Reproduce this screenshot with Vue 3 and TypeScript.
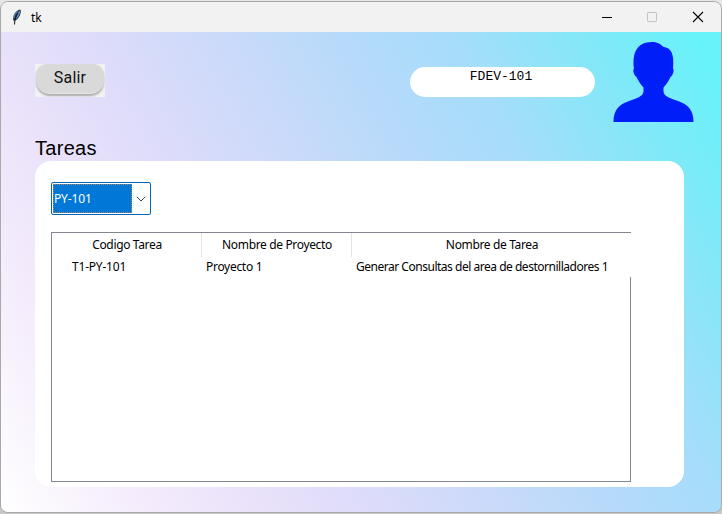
<script setup lang="ts">
import { ref } from 'vue'

interface Task {
  code: string
  project: string
  name: string
}

const user = 'FDEV-101'
const selected = ref('PY-101')
const tasks = ref<Task[]>([
  { code: 'T1-PY-101', project: 'Proyecto 1', name: 'Generar Consultas del area de destornilladores 1' },
])
</script>

<template>
  <div class="desktop">
    <div class="window">
      <header class="titlebar">
        <svg class="feather" width="12" height="18" viewBox="0 0 12 18">
          <path d="M2.200 12.500C1.500 8 4 2.500 9.500 1.500C10.500 5 8.500 10 4.500 12.500Z" fill="#1d2c42" />
          <path d="M5 10.500C5.200 7 6.700 4.200 9 2.600C9.300 5.500 8 8.500 5.500 10.800Z" fill="#5f93d2" />
          <path d="M2.900 10.500C3 7.500 4.500 5 6.800 3.600" fill="none" stroke="#7fa6d6" stroke-width=".9" />
          <path d="M7 5L4 11L3.500 16.500" fill="none" stroke="#111820" stroke-width="1" />
        </svg>
        <span class="title">tk</span>
        <div class="controls">
          <svg width="12" height="12" viewBox="0 0 12 12"><path d="M1 6.500H11" stroke="#000" /></svg>
          <svg width="12" height="12" viewBox="0 0 12 12"><rect x="1.500" y="1.500" width="9" height="9" rx=".7" fill="none" stroke="#c2c2c2" /></svg>
          <svg width="12" height="12" viewBox="0 0 12 12"><path d="M1 1L11 11M11 1L1 11" stroke="#000" stroke-width="1.100" /></svg>
        </div>
      </header>
      <main class="content">
        <div class="top">
          <div class="exit-frame"><button class="exit">Salir</button></div>
          <div class="user">{{ user }}</div>
          <svg class="avatar" width="82" height="82" viewBox="0 0 82 82">
            <path
              fill="#001ef8"
              d="M1.500 81C1.500 69 7 63.500 17 60C25 57 31.500 55.500 31.500 50V46.500C28 43 26 39 24.500 36C22 34.500 20.300 29 22 27.500C20 12 25 1 40 1C46 1 49 3.500 51.500 6C59 6.500 62.500 13 61 27.500C62.500 29 61 34.500 58.500 36C57 39 55 43 51.500 46.500V50C51.500 55.500 58 57 66 60C76 63.500 81.500 69 81.500 81Z"
            />
          </svg>
        </div>
        <h1 class="heading">Tareas</h1>
        <section class="panel">
          <div class="combo">
            <span class="value">{{ selected }}</span>
            <span class="arrow">
              <svg width="10" height="6" viewBox="0 0 10 6"><path d="M.8 .8L5 5L9.200 .8" fill="none" stroke="#444" /></svg>
            </span>
          </div>
          <div class="table">
            <div class="row head">
              <span>Codigo Tarea</span>
              <span>Nombre de Proyecto</span>
              <span>Nombre de Tarea</span>
            </div>
            <div v-for="task in tasks" :key="task.code" class="row item">
              <span class="code">{{ task.code }}</span>
              <span class="project">{{ task.project }}</span>
              <span class="name">{{ task.name }}</span>
            </div>
            <div class="rest"></div>
          </div>
        </section>
      </main>
    </div>
  </div>
</template>

<style>
body {
  margin: 0;
}
</style>

<style scoped>
* {
  box-sizing: border-box;
}
.desktop {
  width: 722px;
  height: 514px;
  padding-top: 1px;
  background: linear-gradient(#e6e6e6, #c8c8c8);
  overflow: hidden;
  font-family: "Noto Sans", sans-serif;
  font-size: 12px;
  color: #000;
}
.window {
  width: 722px;
  height: 512px;
  border: 1px solid #a9a9a9;
  border-radius: 8px;
  overflow: hidden;
  display: flex;
  flex-direction: column;
}
.titlebar {
  height: 30px;
  flex: none;
  display: flex;
  align-items: center;
  padding: 0 17px 0 10px;
  background: #f2f2f2;
}
.feather {
  margin-top: -1px;
}
.title {
  margin-left: 8px;
  font-size: 12px;
  letter-spacing: -0.2px;
}
.controls {
  margin-left: auto;
  margin-top: -1px;
  display: grid;
  grid-template-columns: 45px 46px 12px;
}
.controls svg,
.avatar,
.arrow svg {
  display: block;
}
.content {
  flex: 1;
  display: flex;
  flex-direction: column;
  padding: 9px 27px 0 34px;
  background: linear-gradient(60deg, #fff 0%, #f5ecfc 14%, #e9e1fa 27%, #dddcfa 37%, #cfdafa 47%, #b4dafa 63%, #a5ddfa 73%, #88e6f8 84%, #68f2fa 97%);
}
.top {
  display: flex;
  height: 95px;
}
.exit-frame {
  width: 70px;
  height: 33px;
  margin-top: 23px;
  background: #f2f2f2;
  overflow: hidden;
}
.exit {
  display: block;
  width: 68px;
  height: 30px;
  margin: 0 auto;
  padding: 0 0 3px;
  border: 0;
  border-bottom: 1px solid #e6e6e6;
  border-radius: 11px 11px 14px 14px;
  background: #d9d9d9;
  box-shadow: 0 2px 2px #aaa;
  font: 16px Roboto, sans-serif;
  letter-spacing: 0.2px;
  color: #111;
}
.user {
  width: 185px;
  height: 30px;
  margin: 26px 17px 0 auto;
  padding-right: 3px;
  border-radius: 15px;
  background: #fff;
  font: 13px/19px "Liberation Mono", monospace;
  text-align: center;
}
.heading {
  margin: 0;
  height: 25px;
  font: 20px/24px "Liberation Sans", sans-serif;
  letter-spacing: 0.3px;
}
.panel {
  width: 649px;
  height: 326px;
  padding: 21px 16px 0;
  border-radius: 16px;
  background: #fff;
}
.combo {
  display: flex;
  width: 100px;
  height: 33px;
  padding: 1px;
  border: 1px solid #0067b8;
  border-radius: 2px;
}
.value {
  width: 79px;
  border: 1px dotted #a88462;
  background: #0078d7;
  color: #fff;
  line-height: 28px;
  letter-spacing: -0.15px;
}
.arrow {
  flex: 1;
  display: grid;
  place-items: center;
}
.table {
  display: flex;
  flex-direction: column;
  width: 580px;
  height: 250px;
  margin-top: 17px;
  border: solid #828790;
  border-width: 1px 0 1px 1px;
}
.row {
  display: grid;
  grid-template-columns: 149px 150px 280px;
  white-space: nowrap;
}
.head {
  height: 24px;
  line-height: 24px;
  text-align: center;
  letter-spacing: -0.35px;
}
.head span {
  padding-left: 1px;
}
.head span + span {
  border-left: 1px solid #e3e3e3;
}
.item {
  height: 20px;
  line-height: 20px;
}
.item span {
  padding-left: 5px;
}
.item .code {
  padding-left: 20px;
  letter-spacing: -0.2px;
}
.item .project {
  letter-spacing: -0.3px;
}
.item .name {
  letter-spacing: -0.48px;
}
.rest {
  flex: 1;
  border-right: 1px solid #828790;
}
</style>
